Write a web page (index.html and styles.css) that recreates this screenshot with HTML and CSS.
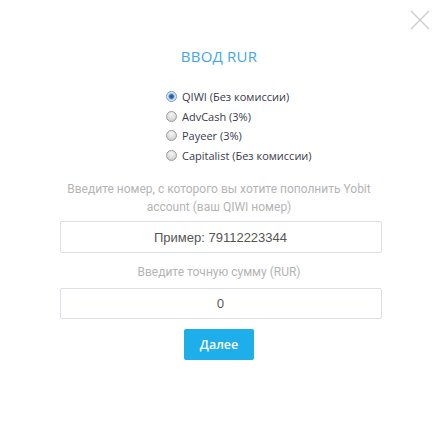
FILE: index.html
```html
<!DOCTYPE html>
<html lang="ru">
<head>
<meta charset="utf-8">
<title>Ввод RUR</title>
<link rel="stylesheet" href="styles.css">
</head>
<body>
<div class="modal">
  <button class="close" aria-label="Закрыть">
    <svg width="20" height="20" viewBox="0 0 20 20"><path d="M1 1 L19 19 M19 1 L1 19" stroke="#c9c9c9" stroke-width="1.2" fill="none"/></svg>
  </button>
  <h2 class="title">ВВОД RUR</h2>
  <div class="options">
    <label class="option"><input type="radio" name="m" checked><span>QIWI (Без комиссии)</span></label>
    <label class="option"><input type="radio" name="m"><span>AdvCash (3%)</span></label>
    <label class="option"><input type="radio" name="m"><span>Payeer (3%)</span></label>
    <label class="option"><input type="radio" name="m"><span>Capitalist (Без комиссии)</span></label>
  </div>
  <p class="hint hint-first">Введите номер, с которого вы хотите пополнить Yobit account (ваш QIWI номер)</p>
  <input class="field field-phone" type="text" placeholder="Пример: 79112223344">
  <p class="hint hint-second">Введите точную сумму (RUR)</p>
  <input class="field field-sum" type="text" value="0">
  <div class="actions"><button class="submit">Далее</button></div>
</div>
</body>
</html>
```
FILE: styles.css
```css
html, body {
  margin: 0;
  padding: 0;
  background: #fff;
}
.modal {
  width: 438px;
  height: 438px;
  position: relative;
  display: flex;
  flex-direction: column;
  align-items: center;
  box-sizing: border-box;
  padding-top: 45px;
}
.close {
  position: absolute;
  top: 10px;
  left: 410px;
  width: 20px;
  height: 20px;
  padding: 0;
  border: 0;
  background: none;
  display: block;
}
.close svg { display: block; }
.title {
  margin: 0;
  font-family: "Open Sans", sans-serif;
  font-weight: 400;
  font-size: 15px;
  line-height: 22px;
  color: #3fa7e8;
  letter-spacing: 0.2px;
}
.options {
  align-self: flex-start;
  margin-left: 166px;
  margin-top: 20px;
  display: flex;
  flex-direction: column;
}
.option {
  display: flex;
  align-items: center;
  height: 19.5px;
  font-family: "Open Sans", sans-serif;
  font-size: 11px;
  color: #3a3a4a;
}
.option input {
  appearance: none;
  -webkit-appearance: none;
  margin: 0 5px 0 0;
  width: 11px;
  height: 11px;
  border-radius: 50%;
  border: 1px solid #9c9c9c;
  background: radial-gradient(circle at 50% 30%, #f6f6f6 0%, #dcdcdc 55%, #c4c4c4 100%);
  box-sizing: border-box;
}
.option input:checked {
  background: radial-gradient(circle at 50% 50%, #1d4f8e 0%, #2a72c0 30%, #8dbbe8 45%, #e3e9f1 62%, #cfd5dd 100%);
  border-color: #8898aa;
}
.hint {
  margin: 0;
  font-family: Roboto, sans-serif;
  font-size: 12px;
  line-height: 17.5px;
  color: #b4b4b4;
  text-align: center;
  width: 322px;
}
.hint-first { margin-top: 16px; }
.hint-second { margin-top: 11px; }
.field {
  width: 322px;
  height: 32px;
  box-sizing: border-box;
  border: 1px solid #dcdfe6;
  border-radius: 2px;
  text-align: center;
  font-family: "Liberation Sans", Arial, sans-serif;
  font-size: 13px;
  color: #555;
  outline: none;
  padding: 0 8px;
  margin: 0;
}
.field::placeholder { color: #555; opacity: 1; }
.field-phone { margin-top: 5px; margin-left: 3px; }
.field-sum {
  margin-top: 6px;
  margin-left: 3px;
  font-family: "Open Sans", sans-serif;
  height: 31px;
}
.actions {
  margin-top: 10px;
}
.submit {
  width: 70px;
  height: 31px;
  border: 0;
  border-radius: 2px;
  background: #1eaeea;
  color: #fff;
  font-family: "Open Sans", sans-serif;
  font-size: 12.5px;
  font-weight: 600;
  padding: 0;
}
```
